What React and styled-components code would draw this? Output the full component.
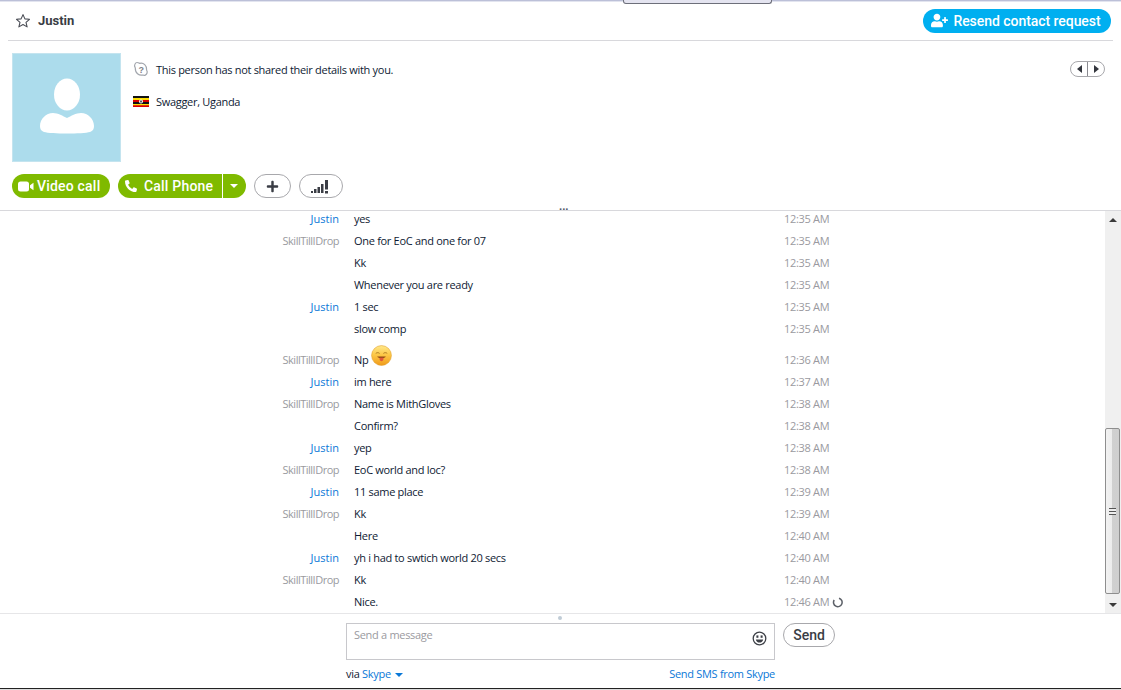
import React from "react";
import styled, { createGlobalStyle } from "styled-components";
import { FaPhoneAlt, FaUserPlus, FaPlus } from "react-icons/fa";

const messages = [
  { id: 1, from: "Justin", text: "yes", time: "12:35 AM" },
  { id: 2, from: "SkillTillIDrop", text: "One for EoC and one for 07", time: "12:35 AM" },
  { id: 3, text: "Kk", time: "12:35 AM" },
  { id: 4, text: "Whenever you are ready", time: "12:35 AM" },
  { id: 5, from: "Justin", text: "1 sec", time: "12:35 AM" },
  { id: 6, text: "slow comp", time: "12:35 AM" },
  { id: 7, from: "SkillTillIDrop", text: "Np", time: "12:36 AM", emoji: true },
  { id: 8, from: "Justin", text: "im here", time: "12:37 AM" },
  { id: 9, from: "SkillTillIDrop", text: "Name is MithGloves", time: "12:38 AM" },
  { id: 10, text: "Confirm?", time: "12:38 AM" },
  { id: 11, from: "Justin", text: "yep", time: "12:38 AM" },
  { id: 12, from: "SkillTillIDrop", text: "EoC world and loc?", time: "12:38 AM" },
  { id: 13, from: "Justin", text: "11 same place", time: "12:39 AM" },
  { id: 14, from: "SkillTillIDrop", text: "Kk", time: "12:39 AM" },
  { id: 15, text: "Here", time: "12:40 AM" },
  { id: 16, from: "Justin", text: "yh i had to swtich world 20 secs", time: "12:40 AM" },
  { id: 17, from: "SkillTillIDrop", text: "Kk", time: "12:40 AM" },
  { id: 18, text: "Nice.", time: "12:46 AM", pending: true },
];

const StarIcon = () => (
  <svg width="16" height="16" viewBox="0 0 16 16">
    <path d="M8 1.6l1.9 4.3 4.6.4-3.5 3 1.1 4.6L8 11.5l-4.1 2.4L5 9.3l-3.5-3 4.6-.4z" fill="none" stroke="#4a4d55" strokeWidth="1.1" strokeLinejoin="round" />
  </svg>
);

const AvatarFigure = () => (
  <svg width="54" height="56" viewBox="0 0 54 56">
    <ellipse cx="27" cy="16.5" rx="13" ry="16" fill="#fff" />
    <path d="M27 40c4-2 9-5 14-5 7 0 13 6 13 13 0 3-1 5-4 6-7 2-39 2-46 0-3-1-4-3-4-6 0-7 6-13 13-13 5 0 10 3 14 5z" fill="#fff" />
  </svg>
);

const MoodIcon = () => (
  <svg width="16" height="16" viewBox="0 0 16 16">
    <path d="M4 1.500C5 1.500 6 2 6.800 2.400 10.500 1.500 14 4.500 13.600 9 14.200 10 14.500 11 14 12.300 13.400 14 11.500 14.800 10 14 6 15 2 12 2.300 7 1.500 5.500 1.300 4 2 3 2.500 2 3.200 1.500 4 1.500z" fill="#fff" stroke="#a2a6ad" strokeWidth="1.200" />
    <text x="8" y="11.500" textAnchor="middle" fontSize="9" fontWeight="700" fill="#7d8188" fontFamily="Liberation Sans, sans-serif">?</text>
  </svg>
);

const UgandaFlag = () => (
  <svg width="16" height="11" viewBox="0 0 16 11">
    <rect width="16" height="11" fill="#d90000" />
    <rect width="16" height="2" fill="#111" />
    <rect y="2" width="16" height="2" fill="#fcdc04" />
    <rect y="6" width="16" height="2" fill="#111" />
    <rect y="8" width="16" height="1.500" fill="#fcdc04" />
    <rect y="9.500" width="16" height="1.500" fill="#d90000" />
    <circle cx="8" cy="5.500" r="2" fill="#fff" />
    <rect x="7.200" y="4.500" width="1.600" height="2" fill="#333" />
  </svg>
);

const VideoIcon = () => (
  <svg width="16" height="11" viewBox="0 0 16 11">
    <rect x="0" y="0.500" width="11" height="10" rx="2.500" fill="#fff" />
    <path d="M12 4.200L15.500 1.800v7.400L12 6.800z" fill="#fff" />
  </svg>
);

const SignalIcon = () => (
  <svg width="20" height="15" viewBox="0 0 20 15">
    <g fill="#3a3d45">
      <rect x="0" y="12" width="2" height="2" />
      <rect x="3" y="10" width="2.500" height="4" />
      <rect x="6.500" y="8" width="2.500" height="6" />
      <rect x="10" y="5" width="2.500" height="9" />
      <rect x="14" y="1" width="3" height="9.500" />
      <rect x="14" y="12" width="3" height="2.500" />
    </g>
  </svg>
);

const SmileIcon = () => (
  <svg width="15" height="15" viewBox="0 0 15 15">
    <circle cx="7.500" cy="7.500" r="6.300" fill="none" stroke="#3d4047" strokeWidth="1.300" />
    <rect x="4.400" y="4.400" width="2" height="2.400" fill="#3d4047" />
    <rect x="8.600" y="4.400" width="2" height="2.400" fill="#3d4047" />
    <path d="M3.800 8.500h7.400c-.3 2-1.800 3.100-3.700 3.100S4.100 10.500 3.800 8.500z" fill="#3d4047" />
  </svg>
);

const TongueEmoji = () => (
  <svg width="21" height="21" viewBox="0 0 22 22">
    <defs>
      <linearGradient id="face" x1="0" y1="0" x2="0" y2="1">
        <stop offset="0%" stopColor="#ffe98c" />
        <stop offset="45%" stopColor="#fdc948" />
        <stop offset="100%" stopColor="#f09a1a" />
      </linearGradient>
    </defs>
    <circle cx="11" cy="11" r="10.400" fill="url(#face)" stroke="#e0a030" strokeWidth="0.600" />
    <path d="M5 8.800c1.200-1 2.800-1 4 0M13 8.800c1.200-1 2.800-1 4 0" fill="none" stroke="#a06c18" strokeWidth="0.900" />
    <path d="M6.500 12h9c-.5 1.300-2.300 1.900-4.500 1.900s-4-.6-4.500-1.900z" fill="#8f4a14" />
    <path d="M9 13.300h4v1.700c0 1.200-.9 1.900-2 1.900s-2-.7-2-1.900z" fill="#e2573c" />
  </svg>
);

const Spinner = () => (
  <svg width="11" height="11" viewBox="0 0 11 11">
    <path d="M7 1.200A4.300 4.300 0 1 1 2.200 3" fill="none" stroke="#5c6068" strokeWidth="1.500" />
  </svg>
);

const App = () => {
  return (
    <Page>
      <GlobalStyle />
      <TopEdge>
        <WindowTab />
      </TopEdge>
      <Header>
        <Title>
          <StarIcon />
          <Name>Justin</Name>
        </Title>
        <ResendButton>
          <FaUserPlus size={17} />
          Resend contact request
        </ResendButton>
      </Header>

      <Profile>
        <Avatar>
          <AvatarFigure />
        </Avatar>
        <Details>
          <DetailRow>
            <MoodIcon />
            <span>This person has not shared their details with you.</span>
          </DetailRow>
          <DetailRow>
            <UgandaFlag />
            <span>Swagger, Uganda</span>
          </DetailRow>
        </Details>
        <Pager>
          <PagerSide $left />
          <PagerSide />
        </Pager>
      </Profile>

      <Actions>
        <GreenButton>
          <VideoIcon />
          Video call
        </GreenButton>
        <SplitGroup>
          <GreenButton $joined>
            <FaPhoneAlt size={12} />
            <span>Call Phone</span>
          </GreenButton>
          <CaretButton>
            <Caret $color="#fff" />
          </CaretButton>
        </SplitGroup>
        <GhostButton $width={37}>
          <FaPlus size={13} color="#3a3d45" />
        </GhostButton>
        <GhostButton $width={44}>
          <SignalIcon />
        </GhostButton>
        <Grip>...</Grip>
      </Actions>

      <Conversation>
        <MessageList>
          {messages.map((msg) => (
            <MessageRow key={msg.id} $tall={msg.emoji}>
              <Sender $me={msg.from === "Justin"}>{msg.from}</Sender>
              <Body>
                {msg.text}
                {msg.emoji && <TongueEmoji />}
              </Body>
              <Time>
                {msg.time}
                {msg.pending && <Spinner />}
              </Time>
            </MessageRow>
          ))}
        </MessageList>
        <Scrollbar>
          <ArrowCell>
            <ArrowUp />
          </ArrowCell>
          <Thumb>
            <ThumbGrip />
          </Thumb>
          <ArrowCell>
            <ArrowDown />
          </ArrowCell>
        </Scrollbar>
      </Conversation>

      <Composer>
        <ResizeDot />
        <ComposerMain>
          <InputBox>
            <Placeholder>Send a message</Placeholder>
            <SmileSlot>
              <SmileIcon />
            </SmileSlot>
          </InputBox>
          <ComposerFoot>
            <span>
              via <BlueText>Skype</BlueText>
              <Caret $color="#0a78d7" />
            </span>
            <BlueText>Send SMS from Skype</BlueText>
          </ComposerFoot>
        </ComposerMain>
        <SendButton>Send</SendButton>
      </Composer>
      <BottomEdge />
    </Page>
  );
};
export default App;

const GlobalStyle = createGlobalStyle`
  html, body {
    margin: 0;
    padding: 0;
    background: #fff;
    overflow: hidden;
  }
`;

const Page = styled.div`
  position: relative;
  width: 1121px;
  height: 690px;
  display: flex;
  flex-direction: column;
  overflow: hidden;
  background: #fff;
  font-family: "Open Sans", "Noto Sans", sans-serif;
  font-size: 11px;
  letter-spacing: -0.3px;
  color: #0e1a33;
`;
const TopEdge = styled.div`
  position: relative;
  flex: none;
  height: 1px;
  background: #bcc0d8;
  box-shadow: 0 1px 0 #e2e4ef;
`;
const WindowTab = styled.div`
  position: absolute;
  top: 0;
  left: 623px;
  width: 149px;
  height: 4px;
  box-sizing: border-box;
  background: #e4e4f0;
  border: 1px solid #6d6f7a;
  border-top: 0;
  border-radius: 0 0 3px 3px;
`;
const Header = styled.div`
  flex: none;
  height: 40px;
  box-sizing: border-box;
  margin: 0 8px;
  padding: 0 2px 0 7px;
  display: flex;
  align-items: center;
  justify-content: space-between;
  border-bottom: 1px solid #d8d8dc;
`;
const Title = styled.div`
  display: flex;
  align-items: center;
  gap: 7px;
`;
const Name = styled.span`
  font-family: Roboto, sans-serif;
  font-weight: 700;
  font-size: 13px;
  letter-spacing: 0;
  line-height: 18px;
  padding-top: 1px;
  color: #3a3d45;
`;
const ResendButton = styled.button`
  height: 24px;
  width: 188px;
  padding: 0 2px 0 0;
  border: 0;
  border-radius: 12px;
  background: #00aff0;
  color: #fff;
  font-family: Roboto, sans-serif;
  font-weight: 500;
  font-size: 14px;
  letter-spacing: -0.05px;
  display: flex;
  align-items: center;
  justify-content: center;
  gap: 5px;
`;
const Profile = styled.div`
  flex: none;
  height: 121px;
  box-sizing: border-box;
  padding: 12px 16px 0 12px;
  display: flex;
`;
const Avatar = styled.div`
  width: 109px;
  height: 109px;
  box-sizing: border-box;
  background: #acdcec;
  border: 1px solid #c4e4ef;
  display: flex;
  align-items: flex-end;
  justify-content: center;
  padding-bottom: 27px;
`;
const Details = styled.div`
  flex: 1;
  padding: 8px 0 0 12px;
  display: flex;
  flex-direction: column;
  gap: 16px;
`;
const DetailRow = styled.div`
  display: flex;
  align-items: center;
  gap: 7px;
  height: 16px;
`;
const Pager = styled.div`
  margin-top: 8px;
  width: 35px;
  height: 16px;
  box-sizing: border-box;
  border: 1px solid #a8a8ac;
  border-radius: 8px;
  display: flex;
`;
const PagerSide = styled.div`
  flex: 1;
  display: flex;
  align-items: center;
  justify-content: center;
  border-right: ${(p) => (p.$left ? "1px solid #8a8a90" : "0")};

  &::before {
    content: "";
    border-top: 4px solid transparent;
    border-bottom: 4px solid transparent;
    border-right: ${(p) => (p.$left ? "5px solid #33363d" : "0")};
    border-left: ${(p) => (p.$left ? "0" : "5px solid #33363d")};
  }
`;
const Actions = styled.div`
  position: relative;
  flex: none;
  height: 49px;
  box-sizing: border-box;
  padding: 12px 12px 0;
  display: flex;
  align-items: flex-start;
  gap: 8px;
  border-bottom: 1px solid #d8d8dc;
`;
const GreenButton = styled.button`
  width: ${(p) => (p.$joined ? "104px" : "98px")};
  height: 24px;
  padding: 0 0 0 ${(p) => (p.$joined ? "7px" : "6px")};
  border: 0;
  border-radius: ${(p) => (p.$joined ? "12px 0 0 12px" : "12px")};
  background: #7fba00;
  color: #fff;
  font-family: Roboto, sans-serif;
  font-weight: 500;
  font-size: 14px;
  letter-spacing: 0.2px;
  display: flex;
  align-items: center;
  gap: ${(p) => (p.$joined ? "7px" : "3px")};
`;
const SplitGroup = styled.div`
  display: flex;
  gap: 1px;
`;
const CaretButton = styled.button`
  width: 23px;
  height: 24px;
  padding: 0 2px 0 0;
  border: 0;
  border-radius: 0 12px 12px 0;
  background: #7fba00;
  display: flex;
  align-items: center;
  justify-content: center;
`;
const Caret = styled.i`
  display: inline-block;
  vertical-align: middle;
  margin-left: ${(p) => (p.$color === "#fff" ? "0" : "4px")};
  border-left: 4px solid transparent;
  border-right: 4px solid transparent;
  border-top: 4px solid ${(p) => p.$color};
`;
const GhostButton = styled.button`
  width: ${(p) => p.$width}px;
  height: 24px;
  padding: 0;
  background: #fff;
  border: 1px solid #a8a8ac;
  border-radius: 12px;
  display: flex;
  align-items: center;
  justify-content: center;
`;
const Grip = styled.span`
  position: absolute;
  left: 559px;
  top: 35px;
  font-size: 11px;
  font-weight: 700;
  letter-spacing: 0;
  line-height: 18px;
  color: #50586a;
`;
const Conversation = styled.div`
  flex: none;
  height: 403px;
  display: flex;
  border-bottom: 1px solid #e6e6e8;
  box-sizing: border-box;
`;
const MessageList = styled.div`
  flex: 1;
  overflow: hidden;

  & > :first-child {
    margin-top: -3px;
  }
`;
const MessageRow = styled.div`
  display: grid;
  grid-template-columns: 339px 445px auto;
  height: ${(p) => (p.$tall ? "31px" : "22px")};
  align-items: end;
  line-height: 22px;
`;
const Sender = styled.div`
  text-align: right;
  letter-spacing: ${(p) => (p.$me ? "0" : "-0.5px")};
  color: ${(p) => (p.$me ? "#0a78d7" : "#9a9aa0")};
`;
const Body = styled.div`
  padding-left: 15px;
  display: flex;
  align-items: flex-end;
  gap: 3px;

  svg {
    margin-bottom: 5px;
  }
`;
const Time = styled.div`
  display: flex;
  align-items: center;
  gap: 3px;
  color: #9a9aa0;
`;
const Scrollbar = styled.div`
  flex: none;
  width: 16px;
  background: #f0f0f0;
  display: flex;
  flex-direction: column;
  justify-content: space-between;
`;
const ArrowCell = styled.div`
  height: 17px;
  display: flex;
  align-items: center;
  justify-content: center;
`;
const ArrowUp = styled.i`
  border-left: 4px solid transparent;
  border-right: 4px solid transparent;
  border-bottom: 4px solid #3a3a3a;
`;
const ArrowDown = styled.i`
  border-left: 4px solid transparent;
  border-right: 4px solid transparent;
  border-top: 4px solid #3a3a3a;
`;
const Thumb = styled.div`
  margin-top: auto;
  margin-bottom: 2px;
  width: 15px;
  height: 166px;
  box-sizing: border-box;
  border: 1px solid #8e8e8e;
  border-radius: 2px;
  background: linear-gradient(to right, #f2f2f2 0%, #ececec 45%, #d0d0d0 50%, #cfcfcf 100%);
  display: flex;
  align-items: center;
  justify-content: center;
`;
const ThumbGrip = styled.div`
  width: 7px;
  height: 7px;
  background: repeating-linear-gradient(to bottom, #555 0 1px, #eee 1px 3px);
`;
const Composer = styled.div`
  position: relative;
  flex: none;
  height: 74px;
  box-sizing: border-box;
  padding: 9px 0 0 346px;
  display: flex;
  align-items: flex-start;
  gap: 8px;
`;
const ResizeDot = styled.i`
  position: absolute;
  left: 558px;
  top: 2px;
  width: 4px;
  height: 4px;
  border-radius: 50%;
  background: #c0ccd6;
`;
const ComposerMain = styled.div`
  width: 429px;
`;
const InputBox = styled.div`
  height: 37px;
  box-sizing: border-box;
  border: 1px solid #c8c8cc;
  padding: 0 7px 0 7px;
  display: flex;
  justify-content: space-between;
`;
const Placeholder = styled.span`
  color: #9a9aa0;
  line-height: 22px;
`;
const SmileSlot = styled.span`
  padding-top: 7px;
`;
const ComposerFoot = styled.div`
  display: flex;
  justify-content: space-between;
  line-height: 16px;
  margin-top: 6px;
`;
const BlueText = styled.span`
  color: #0a78d7;
`;
const SendButton = styled.button`
  width: 52px;
  height: 24px;
  padding: 0;
  background: #fff;
  border: 1px solid #a8a8ac;
  border-radius: 12px;
  color: #3a3d45;
  font-family: Roboto, sans-serif;
  font-weight: 500;
  font-size: 14px;
`;
const BottomEdge = styled.div`
  flex: none;
  height: 2px;
  box-sizing: border-box;
  border-top: 1px solid #222;
  background: #dcdcdc;
`;
